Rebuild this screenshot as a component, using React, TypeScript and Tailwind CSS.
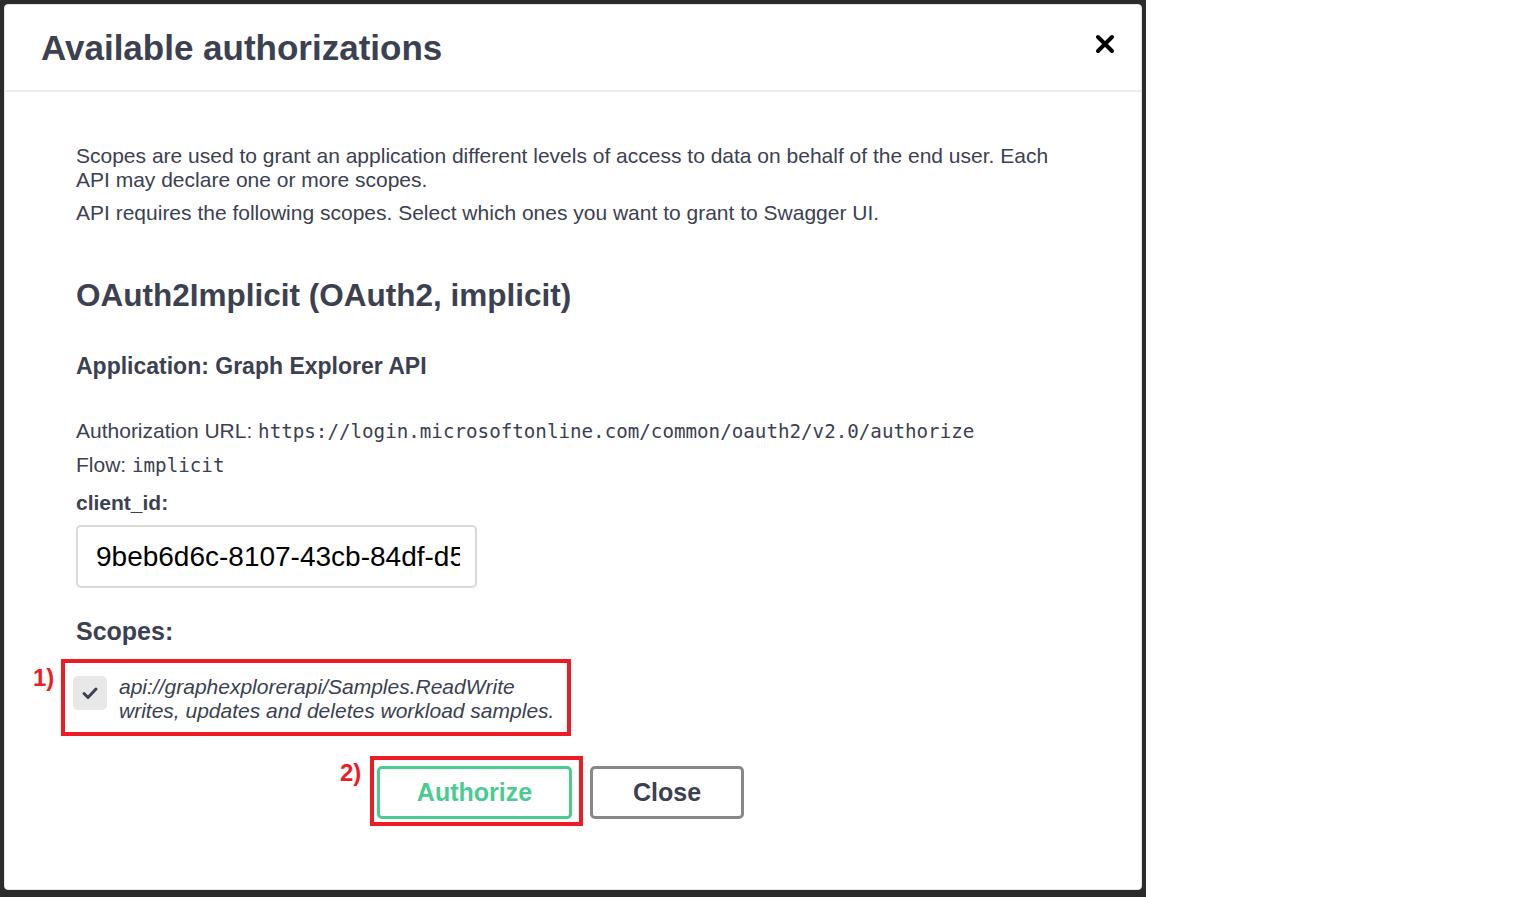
import React from 'react'

const FONT = { fontFamily: '"Liberation Sans", Arial, sans-serif' }
const MONO = { fontFamily: '"DejaVu Sans Mono", "Liberation Mono", monospace' }

function CloseIcon() {
  return (
    <svg width="20" height="20" viewBox="0 0 20 20">
      <path d="M3 3 L17 17 M17 3 L3 17" stroke="#000" strokeWidth="4" strokeLinecap="round" />
    </svg>
  )
}

function Check() {
  return (
    <svg width="18" height="18" viewBox="0 0 18 18">
      <path d="M3 9.5 L7 13.5 L15 5" fill="none" stroke="#3b4151" strokeWidth="3" strokeLinecap="round" strokeLinejoin="round" />
    </svg>
  )
}

export default function App() {
  return (
    <div className="flex w-[1536px] h-[897px] bg-white text-[#3b4151]" style={FONT}>
      <div className="w-[1146px] h-full bg-[#2b2b2b] pt-[4px] pl-[4px] pr-[4px] pb-[7px] flex">
        <div className="flex-1 bg-white rounded-[4px] border border-[#e4e4e4] flex flex-col">
          <div className="h-[87px] border-b-2 border-[#ebebeb] flex items-center justify-between pl-[36px] pr-[26px]">
            <h3 className="text-[35px] font-bold leading-none">Available authorizations</h3>
            <button className="pb-[8px]"><CloseIcon /></button>
          </div>

          <div className="pl-[71px] pt-[52px]">
            <p className="text-[21px] leading-[24px] w-[990px]">
              Scopes are used to grant an application different levels of access to data on behalf of the end user. Each API may declare one or more scopes.
            </p>
            <p className="text-[21px] leading-[24px] mt-[9px]">
              API requires the following scopes. Select which ones you want to grant to Swagger UI.
            </p>

            <h4 className="text-[31.5px] font-bold leading-[36px] mt-[52px]">OAuth2Implicit (OAuth2, implicit)</h4>
            <h6 className="text-[23px] font-bold leading-[28px] mt-[39px]">Application: Graph Explorer API</h6>

            <p className="text-[21px] leading-[28px] mt-[37px]">
              Authorization URL: <code className="text-[19.2px]" style={MONO}>https://login.microsoftonline.com/common/oauth2/v2.0/authorize</code>
            </p>
            <p className="text-[21px] leading-[28px] mt-[5px]">
              Flow: <code className="text-[19.2px]" style={MONO}>implicit</code>
            </p>

            <label className="block text-[21px] font-bold leading-[28px] mt-[9px]">client_id:</label>
            <div className="mt-[8px] w-[401px] h-[63px] border-2 border-[#d9d9d9] rounded-[5px] flex items-center pl-[18px] pr-[15px]">
              <div className="overflow-hidden flex-1">
                <span className="text-[28px] whitespace-nowrap text-black">9beb6d6c-8107-43cb-84df-d5</span>
              </div>
            </div>

            <h6 className="text-[25px] font-bold leading-[30px] mt-[28px]">Scopes:</h6>

            <div className="relative -ml-[15px] mt-[13px] w-[510px] border-4 border-[#ed1c24] flex pt-[13px] pl-[8px] pb-[9px]">
              <span className="absolute -left-[32px] top-[3px] text-[24px] font-bold text-[#ed1c24] leading-none">1)</span>
              <div className="w-[34px] h-[34px] bg-[#e8e8e8] rounded-[5px] flex items-center justify-center shrink-0">
                <Check />
              </div>
              <div className="ml-[12px] -mt-[1px] italic text-[21px] leading-[24px]">
                <div>api://graphexplorerapi/Samples.ReadWrite</div>
                <div>writes, updates and deletes workload samples.</div>
              </div>
            </div>

            <div className="flex items-start mt-[20px] pl-[294px]">
              <div className="relative border-4 border-[#ed1c24] pt-[6px] pl-[3px] pr-[7px] pb-[3px]">
                <span className="absolute -left-[34px] top-[1px] text-[24px] font-bold text-[#ed1c24] leading-none">2)</span>
                <button className="w-[195px] h-[53px] border-[3px] border-[#49cc90] rounded-[5px] text-[#49cc90] font-bold text-[25px]">
                  Authorize
                </button>
              </div>
              <button className="ml-[7px] mt-[10px] w-[154px] h-[53px] border-[3px] border-[#888] rounded-[5px] text-[#3b4151] font-bold text-[25px]">
                Close
              </button>
            </div>
          </div>
        </div>
      </div>
    </div>
  )
}
